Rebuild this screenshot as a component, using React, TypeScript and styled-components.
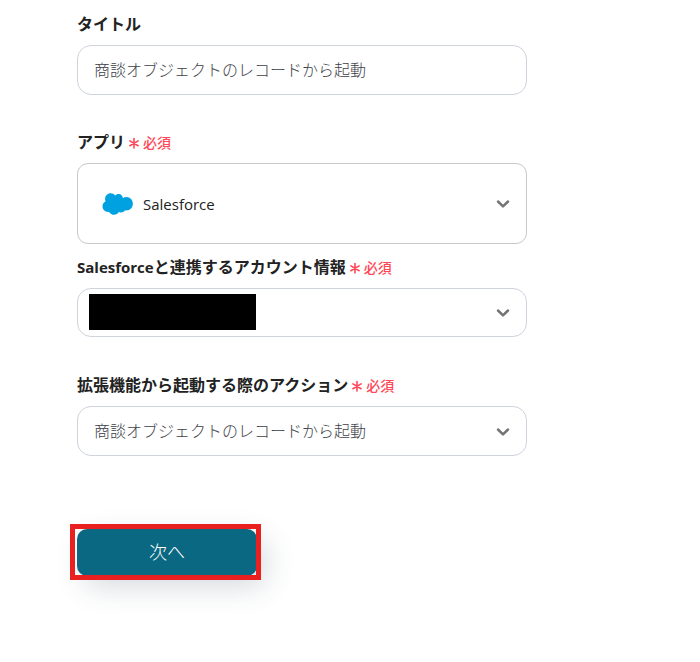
import React from "react";
import styled, { createGlobalStyle } from "styled-components";

const GlobalStyle = createGlobalStyle`
  *, *::before, *::after { box-sizing: border-box; }
  body {
    margin: 0;
    background: #fff;
    color: #222;
    font-family: "Open Sans", "Noto Sans CJK JP", sans-serif;
    font-size: 16px;
  }
`;

const Form = styled.form`
  display: flex;
  flex-direction: column;
  align-items: flex-start;
  max-width: 604px;
  padding: 12px 77px 80px;
`;

const Field = styled.div<{ $gap: number }>`
  display: flex;
  flex-direction: column;
  gap: 9px;
  width: 100%;
  margin-bottom: ${(p) => p.$gap}px;
`;

const LabelRow = styled.div`
  display: flex;
  align-items: center;
  gap: 4px;
  height: 24px;
`;

const Label = styled.label`
  font-size: 16px;
  font-weight: 700;
  line-height: 24px;
  white-space: nowrap;
`;

const LatinWord = styled.span`
  font-size: 15px;
`;

const RequiredMark = styled.span`
  display: flex;
  align-items: center;
  gap: 4px;
  color: #ff4757;
  font-size: 14px;
  font-weight: 500;
  line-height: 24px;
  padding-top: 2px;
  white-space: nowrap;
`;

const TextInput = styled.input`
  width: 100%;
  height: 50px;
  padding: 0 16px 3px;
  border: 1px solid #ced3dc;
  border-radius: 14px;
  background: #fff;
  color: #3c4148;
  font: inherit;
  font-weight: 300;
`;

const SelectBox = styled.div<{ $height: number }>`
  display: grid;
  grid-template-columns: auto 1fr auto;
  align-items: center;
  height: ${(p) => p.$height}px;
`;

const Select = styled.select<{ $app?: boolean }>`
  grid-area: 1 / 1 / 2 / -1;
  width: 100%;
  height: 100%;
  appearance: none;
  padding: ${(p) => (p.$app ? "0 48px 0 65px" : "0 48px 1px 16px")};
  border: 1px solid ${(p) => (p.$app ? "#c8c8c8" : "#ced3dc")};
  border-radius: ${(p) => (p.$app ? 11 : 14)}px;
  background: #fff;
  color: ${(p) => (p.$app ? "#222" : "#3c4148")};
  font: inherit;
  font-size: ${(p) => (p.$app ? 15 : 16)}px;
  font-weight: ${(p) => (p.$app ? 400 : 300)};
`;

const Leading = styled.span<{ $inset: number }>`
  grid-area: 1 / 1;
  z-index: 1;
  display: flex;
  margin-left: ${(p) => p.$inset}px;
  pointer-events: none;
`;

const Redaction = styled.span`
  width: 167px;
  height: 36px;
  margin-bottom: 2px;
  background: #000;
`;

const Trailing = styled.span`
  grid-area: 1 / 3;
  z-index: 1;
  display: flex;
  padding: 1px 16px 0 0;
  pointer-events: none;
`;

const Highlight = styled.div`
  position: relative;
  display: flex;
  margin-top: 73px;

  &::after {
    content: "";
    position: absolute;
    inset: -5px -4px -4px -7px;
    border: 5px solid #e92020;
    pointer-events: none;
  }
`;

const SubmitButton = styled.button`
  width: 180px;
  height: 47px;
  padding: 0 0 3px;
  border: 0;
  border-radius: 10px;
  background: #0b6882;
  color: #fff;
  font: inherit;
  font-size: 18px;
  font-weight: 300;
  box-shadow: 8px 10px 30px rgba(40, 60, 80, 0.2);
  cursor: pointer;
`;

const Required = () => (
  <RequiredMark>
    <svg width="10" height="12" viewBox="0 0 10 12" fill="none" stroke="currentColor" strokeWidth="1.6" strokeLinecap="round" aria-hidden="true">
      <path d="M5 1.6v9.400M.9 3.900l8.200 4.800M9.100 3.900L.9 8.700" />
    </svg>
    必須
  </RequiredMark>
);

const Chevron = () => (
  <Trailing>
    <svg width="16" height="16" viewBox="0 0 16 16" fill="none" stroke="#747474" strokeWidth="2.5" strokeLinecap="round" strokeLinejoin="round" aria-hidden="true">
      <path d="M3 5.500l5 4.900 5-4.900" />
    </svg>
  </Trailing>
);

const SalesforceCloud = () => (
  <svg width="32" height="24" viewBox="0 0 32 24" aria-hidden="true">
    <path
      fill="#00a1e0"
      d="M13 3.400C12 2 10.500 1.200 8.700 1.200 5.500 1.200 3.100 3.700 3.100 6.900c0 .9.200 1.700.500 2.400C1.700 10.300.5 12.100.5 14.300c0 3.200 2.500 5.700 5.600 5.700.4 0 .7 0 1.100-.1 1 1.800 2.800 2.900 4.900 2.900 2 0 3.700-1 4.700-2.700.7.300 1.300.4 2 .4 1.800 0 3.300-.8 4.200-2.200.5.100 1 .2 1.500.2 3.600 0 6.400-3 6.400-6.700s-2.800-6.800-6.400-6.800c-1.300 0-2.500.3-3.500.9C20.100 3.300 18.800 2 17 1.900c-1.600-.1-3 .5-4 1.500z"
    />
  </svg>
);

export default function App() {
  return (
    <>
      <GlobalStyle />
      <Form onSubmit={(event) => event.preventDefault()}>
        <Field $gap={35}>
          <LabelRow>
            <Label htmlFor="title">タイトル</Label>
          </LabelRow>
          <TextInput id="title" defaultValue="商談オブジェクトのレコードから起動" />
        </Field>

        <Field $gap={11}>
          <LabelRow>
            <Label htmlFor="app">アプリ</Label>
            <Required />
          </LabelRow>
          <SelectBox $height={81}>
            <Select id="app" $app>
              <option>Salesforce</option>
            </Select>
            <Leading $inset={25}>
              <SalesforceCloud />
            </Leading>
            <Chevron />
          </SelectBox>
        </Field>

        <Field $gap={36}>
          <LabelRow>
            <Label htmlFor="account">
              <LatinWord>Salesforce</LatinWord>と連携するアカウント情報
            </Label>
            <Required />
          </LabelRow>
          <SelectBox $height={49}>
            <Select id="account">
              <option></option>
            </Select>
            <Leading $inset={12}>
              <Redaction />
            </Leading>
            <Chevron />
          </SelectBox>
        </Field>

        <Field $gap={0}>
          <LabelRow>
            <Label htmlFor="action">拡張機能から起動する際のアクション</Label>
            <Required />
          </LabelRow>
          <SelectBox $height={50}>
            <Select id="action">
              <option>商談オブジェクトのレコードから起動</option>
            </Select>
            <Chevron />
          </SelectBox>
        </Field>

        <Highlight>
          <SubmitButton type="submit">次へ</SubmitButton>
        </Highlight>
      </Form>
    </>
  );
}
